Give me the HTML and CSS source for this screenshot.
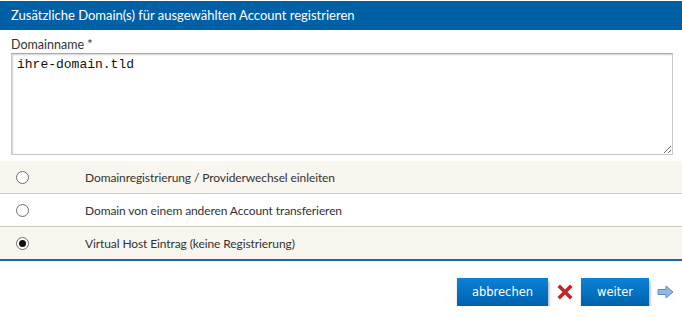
FILE: index.html
```html
<!DOCTYPE html>
<html lang="de">
<head>
<meta charset="utf-8">
<title>Domain registrieren</title>
<link rel="stylesheet" href="styles.css">
</head>
<body>
<div class="dialog">
  <div class="header">Zusätzliche Domain(s) für ausgewählten Account registrieren</div>
  <div class="field">
    <label class="label" for="dn">Domainname *</label>
    <textarea id="dn" class="textarea">ihre-domain.tld</textarea>
  </div>
  <div class="options">
    <label class="option alt">
      <span class="radio-cell"><input type="radio" name="mode"></span>
      <span class="opt-text">Domainregistrierung / Providerwechsel einleiten</span>
    </label>
    <label class="option">
      <span class="radio-cell"><input type="radio" name="mode"></span>
      <span class="opt-text">Domain von einem anderen Account transferieren</span>
    </label>
    <label class="option alt last">
      <span class="radio-cell"><input type="radio" name="mode" checked></span>
      <span class="opt-text">Virtual Host Eintrag (keine Registrierung)</span>
    </label>
  </div>
  <div class="actions">
    <button class="btn">abbrechen</button>
    <span class="icon">
      <svg width="16" height="16" viewBox="0 0 16 16"><path d="M3 3 L13 13 M13 3 L3 13" stroke="#c0262b" stroke-width="3.6" stroke-linecap="square"/></svg>
    </span>
    <button class="btn btn-next">weiter</button>
    <span class="icon">
      <svg width="17" height="14" viewBox="0 0 17 14"><path d="M1 4.5 H9 V1 L16 7 L9 13 V9.5 H1 Z" fill="#8fb6e8" stroke="#5b8cc9" stroke-width="1"/></svg>
    </span>
  </div>
</div>
</body>
</html>
```

FILE: styles.css
```css
* { box-sizing: border-box; }
html, body { margin: 0; padding: 0; background: #fff; }
body { font-family: "Lato", "Noto Sans", sans-serif; color: #333; }

.dialog { width: 682px; padding-top: 1px; }

.header {
  height: 29px;
  background: #0060a6;
  color: #fff;
  font-size: 13px;
  line-height: 29px;
  padding-left: 11px;
}

.field { padding: 8px 9px 0 11px; }
.label { display: block; font-size: 12.5px; line-height: 14px; color: #333; margin-bottom: 1px; }

.textarea {
  display: block;
  width: 662px;
  height: 102px;
  border: 1px solid #c8c8c8;
  border-top-color: #a8a8a8;
  box-shadow: inset 1px 1px 2px rgba(0,0,0,0.18);
  font-family: "Liberation Mono", monospace;
  font-size: 13px;
  line-height: 15px;
  padding: 3px 5px;
  color: #111;
  resize: vertical;
  margin: 0;
}

.options { margin-top: 6px; }
.option {
  display: flex;
  align-items: center;
  height: 33px;
  border-bottom: 1px solid #d0cbbd;
  font-size: 12px;
  letter-spacing: -0.1px;
  color: #333;
}
.option.alt { background: #f9f6f0; }
.option.last { border-bottom: 2px solid #1f67a3; height: 34px; }
.radio-cell { width: 85px; display: flex; padding-left: 16px; }
.radio-cell input {
  appearance: none;
  -webkit-appearance: none;
  margin: 0;
  width: 13px;
  height: 13px;
  border: 1px solid #6e6e6e;
  border-radius: 50%;
  background: #fff;
  display: grid;
  place-items: center;
}
.radio-cell input:checked::after {
  content: "";
  width: 7px;
  height: 7px;
  border-radius: 50%;
  background: #111;
}
.opt-text { display: block; }

.actions {
  display: flex;
  align-items: center;
  justify-content: flex-end;
  padding: 17px 0 0 0;
}
.btn {
  height: 28px;
  width: 91px;
  border: none;
  color: #fff;
  font-family: "DejaVu Sans", Verdana, sans-serif;
  font-size: 11.5px;
  background: linear-gradient(#0a82d6, #0061ad);
  box-shadow: 1px 3px 3px rgba(0,0,0,0.35);
  padding: 0;
  margin: 0;
}
.btn-next { width: 68px; }
.icon { width: 33px; display: flex; justify-content: center; align-items: center; }
```
